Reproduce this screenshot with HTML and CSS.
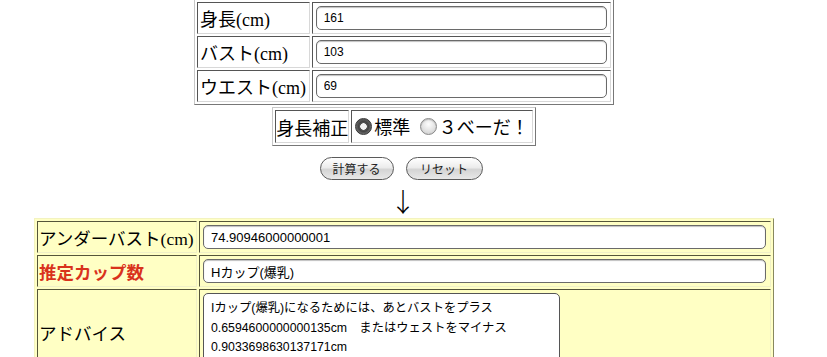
FILE: index.html
```html
<!DOCTYPE html>
<html lang="ja">
<head>
<meta charset="utf-8">
<title>カップ数計算</title>
<link rel="stylesheet" href="styles.css">
</head>
<body>
<div class="page">
  <table class="grid top">
    <tr>
      <td class="lab">身長(cm)</td>
      <td class="val"><input class="box" type="text" value="161"></td>
    </tr>
    <tr>
      <td class="lab">バスト(cm)</td>
      <td class="val"><input class="box" type="text" value="103"></td>
    </tr>
    <tr>
      <td class="lab">ウエスト(cm)</td>
      <td class="val"><input class="box" type="text" value="69"></td>
    </tr>
  </table>

  <table class="grid corr">
    <tr>
      <td class="corr-lab">身長補正</td>
      <td class="corr-val">
        <label class="opt"><input class="radio" type="radio" name="h" checked>標準</label>
        <label class="opt"><input class="radio" type="radio" name="h">３べーだ！</label>
      </td>
    </tr>
  </table>

  <div class="actions">
    <button class="pill" type="button">計算する</button>
    <button class="pill" type="button">リセット</button>
  </div>

  <div class="arrow">↓</div>

  <table class="grid result">
    <tr>
      <td class="rlab">アンダーバスト(cm)</td>
      <td class="rval"><input class="box wide" type="text" value="74.90946000000001"></td>
    </tr>
    <tr>
      <td class="rlab hot">推定カップ数</td>
      <td class="rval"><input class="box wide" type="text" value="Hカップ(爆乳)"></td>
    </tr>
    <tr>
      <td class="rlab">アドバイス</td>
      <td class="rval"><textarea class="advice">Iカップ(爆乳)になるためには、あとバストをプラス
0.6594600000000135cm　またはウェストをマイナス
0.9033698630137171cm</textarea></td>
    </tr>
  </table>
</div>
</body>
</html>
```
FILE: styles.css
```css
html, body {
  margin: 0;
  padding: 0;
  background: #fff;
}

body {
  font-family: "Liberation Serif", "Noto Sans CJK JP", serif;
  color: #000;
  overflow: hidden;
}

.page {
  width: 808px;
  display: flex;
  flex-direction: column;
  align-items: center;
}

.grid {
  border-collapse: separate;
  border-spacing: 2px;
  border: 1px solid;
  border-color: #c8c8c8 #777 #777 #c8c8c8;
}

.grid td {
  border: 1px solid;
  border-color: #555 #d8d8d8 #d8d8d8 #555;
  padding: 0;
}

.top {
  margin-top: -1px;
  width: 420px;
}

.lab {
  width: 110px;
  height: 30px;
  font-size: 18px;
  padding: 0 0 0 2px !important;
  white-space: nowrap;
}

.val {
  width: 296px;
  padding: 0 0 0 3px !important;
}

.box {
  display: block;
  box-sizing: border-box;
  width: 291px;
  height: 24px;
  margin: 0;
  padding: 0 0 0 7px;
  border: 1px solid #6a6a6a;
  border-radius: 5px;
  background: #fff;
  box-shadow: inset 0 1px 1px rgba(0,0,0,0.25);
  font-family: "Liberation Sans", "Noto Sans CJK JP", sans-serif;
  font-size: 12px;
  color: #000;
}

.corr {
  margin-top: 2px;
  width: 262px;
}

.corr-lab {
  width: 72px;
  height: 31px;
  font-size: 18px;
  text-align: center;
  white-space: nowrap;
}

.corr-val {
  font-size: 18px;
  white-space: nowrap;
  padding-left: 1px !important;
}

.opt {
  display: inline-flex;
  align-items: center;
  margin-right: 3px;
}

.radio {
  appearance: none;
  -webkit-appearance: none;
  width: 17px;
  height: 17px;
  margin: 0 2px 0 2px;
  border-radius: 50%;
  border: 1px solid #888;
  background: radial-gradient(circle at 50% 35%, #fdfdfd 0%, #e2e2e2 55%, #c4c4c4 100%);
  box-shadow: inset 0 1px 1px rgba(0,0,0,0.2);
}

.radio:checked {
  border-color: #333;
  background: radial-gradient(circle, #f4f4f4 0 3px, #5a5a5a 3.5px, #444 5px, #777 8px);
}

.actions {
  display: flex;
  gap: 12px;
  margin-top: 11px;
  margin-right: 6px;
}

.pill {
  box-sizing: border-box;
  height: 23px;
  padding: 0 12px;
  border: 1px solid #5a5a5a;
  border-radius: 12px;
  background: linear-gradient(#ffffff 0%, #ececec 45%, #d4d4d4 55%, #e8e8e8 100%);
  font-family: "Noto Sans CJK JP", sans-serif;
  font-size: 12px;
  color: #222;
  line-height: 20px;
}

.pill:first-child {
  width: 74px;
}

.pill:last-child {
  width: 77px;
}

.arrow {
  font-family: "Noto Sans CJK JP", sans-serif;
  font-weight: 300;
  font-size: 26px;
  line-height: 30px;
  margin-top: 6px;
  margin-right: 2px;
  height: 32px;
}

.result {
  width: 740px;
  background: #ffffc4;
  border-color: #f3f3c0 #888860 #888860 #f3f3c0;
}

.result td {
  border-color: #55553a #f0f0c8 #f0f0c8 #55553a;
}

.rlab {
  width: 157px;
  height: 30px;
  font-size: 17.5px;
  padding: 0 0 0 1px !important;
  white-space: nowrap;
}

.hot {
  color: #d9321c;
  font-weight: bold;
}

.rval {
  padding: 0 0 0 3px !important;
}

.box.wide {
  width: 563px;
  font-size: 13px;
}

.advice {
  display: block;
  box-sizing: border-box;
  width: 357px;
  height: 80px;
  margin: 3px 0 2px 0;
  padding: 5px 0 0 7px;
  border: 1px solid #555;
  border-radius: 5px;
  background: #fff;
  resize: none;
  overflow: hidden;
  font-family: "Liberation Sans", "Noto Sans CJK JP", sans-serif;
  font-size: 12.3px;
  line-height: 19.5px;
  color: #000;
}
```
